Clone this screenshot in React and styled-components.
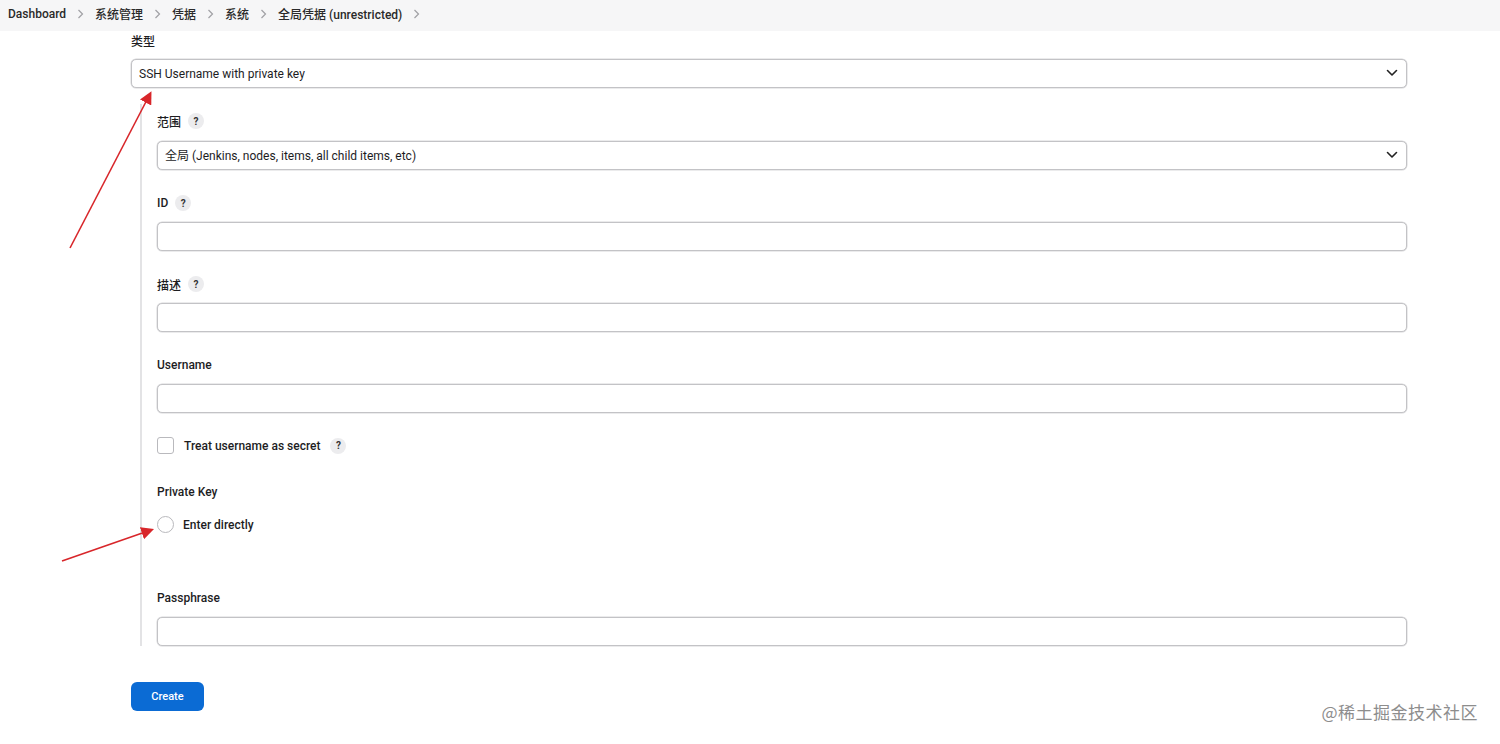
// App.jsx
import React from 'react';
import styled, { createGlobalStyle } from 'styled-components';

const GlobalStyle = createGlobalStyle`
  html, body {
    margin: 0;
    padding: 0;
    background: #fff;
    font-family: Roboto, "Liberation Sans", "Noto Sans CJK SC", sans-serif;
    color: #1d1d1f;
  }
`;

const Page = styled.div`
  position: relative;
  width: 1500px;
  height: 744px;
  overflow: hidden;
`;

const Breadcrumbs = styled.nav`
  height: 31px;
  box-sizing: border-box;
  padding: 0 0 4px 8px;
  background: #f6f6f7;
  display: flex;
  align-items: center;
  font-size: 12px;
  font-weight: 500;
  color: #2a2a2a;
`;

const Crumb = styled.span`
  white-space: nowrap;
`;

const Chevron = styled.span`
  display: inline-flex;
  width: 29px;
  justify-content: center;
  color: #a0a0a4;
  svg { display: block; }
`;

const Main = styled.main`
  padding: 0 93px 0 131px;
`;

const Field = styled.div`
  margin-bottom: ${p => p.$last ? '0' : '24px'};
`;

const Label = styled.div`
  display: flex;
  align-items: center;
  gap: 7px;
  height: 18px;
  font-size: 12px;
  font-weight: 500;
  margin-bottom: ${p => p.$gap ?? 10}px;
`;

const Help = styled.span`
  display: inline-flex;
  align-items: center;
  justify-content: center;
  width: 16px;
  height: 16px;
  border-radius: 50%;
  background: #ececee;
  font-size: 10px;
  font-weight: 700;
  color: #333;
`;

const SelectWrap = styled.div`
  position: relative;
  svg {
    position: absolute;
    right: 9px;
    top: 10px;
    pointer-events: none;
  }
`;

const Select = styled.select`
  appearance: none;
  width: 100%;
  height: 29px;
  box-sizing: border-box;
  border: 1px solid #c3c3c6;
  border-radius: 5px;
  background: #fff;
  padding: 0 30px 0 7px;
  font-family: inherit;
  font-size: 12px;
  color: #1d1d1f;
  box-shadow: 0 0 0 0.5px #d8d8da;
`;

const Input = styled.input`
  display: block;
  width: 100%;
  height: 29px;
  box-sizing: border-box;
  border: 1px solid #c3c3c6;
  border-radius: 5px;
  box-shadow: 0 0 0 0.5px #d8d8da;
  background: #fff;
`;

const Nested = styled.div`
  margin: 16px 0 0 9px;
  padding: 8px 0 0 15px;
  border-left: 2px solid #e3e3e5;
`;

const CheckRow = styled.label`
  display: flex;
  align-items: center;
  gap: 10px;
  height: 17px;
  font-size: 12px;
  font-weight: 500;
  margin: 1px 0 29px;
`;

const Box = styled.span`
  width: 17px;
  height: 17px;
  box-sizing: border-box;
  border: 1px solid #b9b9bd;
  border-radius: 3px;
`;

const Radio = styled.span`
  width: 17px;
  height: 17px;
  box-sizing: border-box;
  border: 1px solid #b9b9bd;
  border-radius: 50%;
`;

const RadioRow = styled.label`
  display: flex;
  align-items: center;
  gap: 9px;
  height: 17px;
  font-size: 12px;
  font-weight: 500;
  margin: 15px 0 56px;
`;

const Button = styled.button`
  margin-top: 36px;
  width: 73px;
  height: 29px;
  border: none;
  border-radius: 6px;
  background: #0b6bd4;
  color: #fff;
  font-family: inherit;
  font-size: 11px;
  font-weight: 500;
`;

const Arrows = styled.svg`
  position: absolute;
  left: 0;
  top: 0;
  pointer-events: none;
`;

const Watermark = styled.div`
  position: absolute;
  right: 22px;
  bottom: 20px;
  font-size: 17px;
  color: #8d8d8d;
  font-family: "Noto Sans CJK SC", sans-serif;
  letter-spacing: 0.5px;
`;

const ChevronRight = () => (
  <svg width="7" height="10" viewBox="0 0 7 10"><path d="M1.5 1l4 4-4 4" fill="none" stroke="currentColor" strokeWidth="1.2" /></svg>
);

const ChevronDown = () => (
  <svg width="12" height="8" viewBox="0 0 12 8"><path d="M1.5 1.5L6 6l4.5-4.5" fill="none" stroke="#222" strokeWidth="1.6" strokeLinecap="round" strokeLinejoin="round" /></svg>
);

const crumbs = ['Dashboard', '系统管理', '凭据', '系统', '全局凭据 (unrestricted)'];

const DropDown = ({ value }) => (
  <SelectWrap>
    <Select defaultValue={value}><option>{value}</option></Select>
    <ChevronDown />
  </SelectWrap>
);

const App = () => (
  <Page>
    <GlobalStyle />
    <Breadcrumbs>
      {crumbs.map(c => (
        <React.Fragment key={c}>
          <Crumb>{c}</Crumb>
          <Chevron><ChevronRight /></Chevron>
        </React.Fragment>
      ))}
    </Breadcrumbs>
    <Main>
      <Label>类型</Label>
      <DropDown value="SSH Username with private key" />
      <Nested>
        <Field>
          <Label $gap={11}>范围 <Help>?</Help></Label>
          <DropDown value="全局 (Jenkins, nodes, items, all child items, etc)" />
        </Field>
        <Field>
          <Label>ID <Help>?</Help></Label>
          <Input />
        </Field>
        <Field>
          <Label>描述 <Help>?</Help></Label>
          <Input />
        </Field>
        <Field>
          <Label>Username</Label>
          <Input />
        </Field>
        <CheckRow><Box />Treat username as secret <Help>?</Help></CheckRow>
        <Label $gap={0}>Private Key</Label>
        <RadioRow><Radio />Enter directly</RadioRow>
        <Field $last>
          <Label>Passphrase</Label>
          <Input />
        </Field>
      </Nested>
      <Button>Create</Button>
    </Main>
    <Arrows width="1500" height="744">
      <defs>
        <marker id="head" markerWidth="8" markerHeight="8" refX="6" refY="4" orient="auto">
          <path d="M0 0L8 4L0 8z" fill="#d8262a" />
        </marker>
      </defs>
      <line x1="70" y1="248" x2="150" y2="94" stroke="#d8262a" strokeWidth="1.6" markerEnd="url(#head)" />
      <line x1="62" y1="561" x2="151" y2="530" stroke="#d8262a" strokeWidth="1.6" markerEnd="url(#head)" />
    </Arrows>
    <Watermark>@稀土掘金技术社区</Watermark>
  </Page>
);

export default App;
